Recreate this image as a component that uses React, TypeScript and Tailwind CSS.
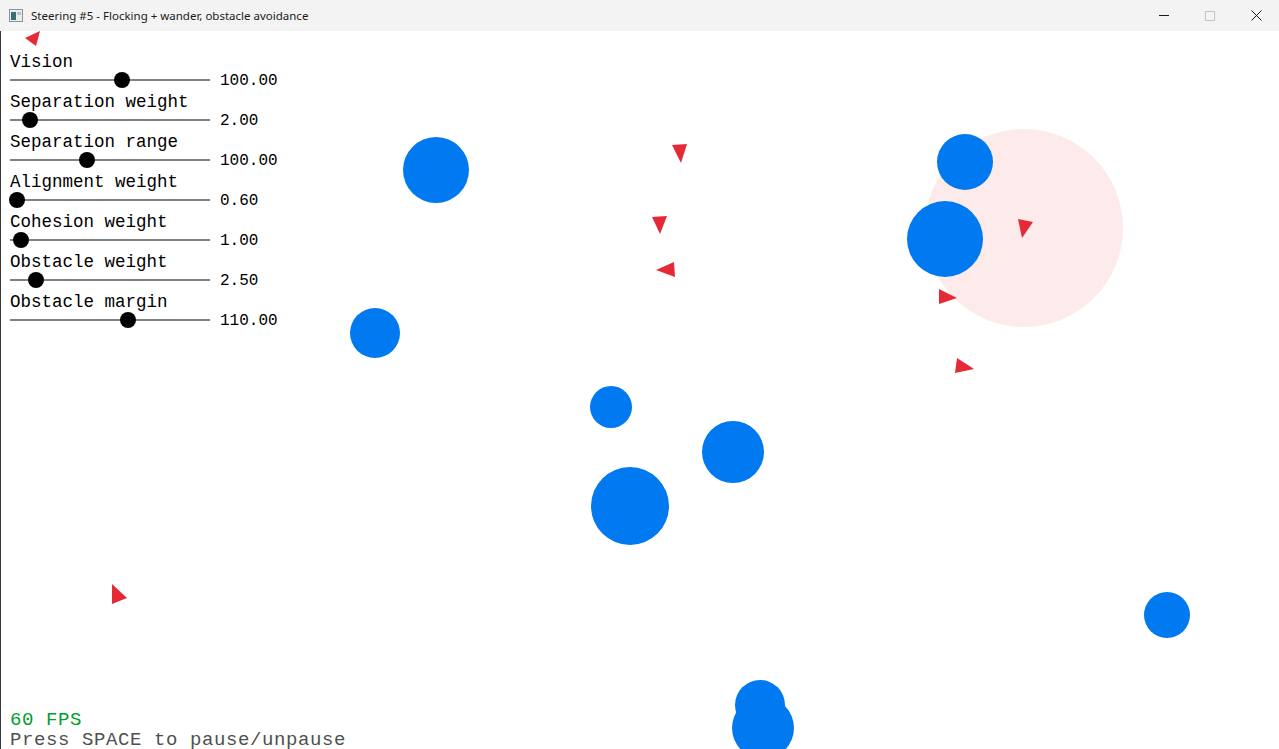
import React from "react";

const sliders = [
  { label: "Vision", pos: 112, value: "100.00" },
  { label: "Separation weight", pos: 20, value: "2.00" },
  { label: "Separation range", pos: 77, value: "100.00" },
  { label: "Alignment weight", pos: 7, value: "0.60" },
  { label: "Cohesion weight", pos: 11, value: "1.00" },
  { label: "Obstacle weight", pos: 26, value: "2.50" },
  { label: "Obstacle margin", pos: 118, value: "110.00" },
];

const circles: [number, number, number][] = [
  [436, 139, 33],
  [375, 302, 25],
  [965, 131, 28],
  [945, 208, 38],
  [611, 376, 21],
  [733, 421, 31],
  [630, 475, 39],
  [1167, 584, 23],
  [760, 674, 25],
  [763, 697, 31],
];

const tris: [number, number][][] = [
  [[25, 38], [40, 31], [36, 46]],
  [[672, 145], [687, 144], [681, 163]],
  [[652, 217], [667, 216], [660, 234]],
  [[656, 270], [674, 262], [675, 277]],
  [[1018, 219], [1033, 222], [1022, 238]],
  [[939, 289], [957, 298], [939, 304]],
  [[957, 358], [974, 369], [955, 373]],
  [[112, 584], [127, 598], [112, 604]],
];

export default function App() {
  return (
    <div className="w-[1279px] h-[749px] overflow-hidden bg-white flex flex-col">
      <div className="h-[31px] bg-[#f3f3f3] flex items-center shrink-0">
        <svg width="14" height="13" viewBox="0 0 14 13" className="ml-[9px]">
          <rect x="0.5" y="0.5" width="13" height="12" fill="#e8eef0" stroke="#8a9499" />
          <rect x="2" y="3" width="5" height="8" fill="#3d6b6e" />
          <rect x="8" y="3" width="4" height="3" fill="#b8c6cc" />
        </svg>
        <span
          className="ml-[8px] text-[11.5px] text-[#1a1a1a]"
          style={{ fontFamily: '"Segoe UI", "Noto Sans", sans-serif' }}
        >
          Steering #5 - Flocking + wander, obstacle avoidance
        </span>
        <div className="ml-auto flex items-center h-full">
          <div className="w-[46px] h-full flex items-center justify-center">
            <div className="w-[10px] h-[1px] bg-[#1a1a1a]" />
          </div>
          <div className="w-[46px] h-full flex items-center justify-center">
            <div className="w-[10px] h-[10px] border border-[#c4c4c4]" />
          </div>
          <div className="w-[46px] h-full flex items-center justify-center">
            <svg width="11" height="11" viewBox="0 0 11 11">
              <path d="M0.5 0.5 L10.5 10.5 M10.5 0.5 L0.5 10.5" stroke="#1a1a1a" strokeWidth="1" />
            </svg>
          </div>
        </div>
      </div>
      <div className="relative flex-1 flex flex-col border-l border-[#3a3a3a] overflow-hidden">
        <svg className="absolute left-[-1px] top-0" width="1279" height="718" viewBox="0 31 1279 718">
          <circle cx="1024" cy="228" r="99" fill="#fdeaeb" />
          {circles.map(([x, y, r], i) => (
            <circle key={i} cx={x} cy={y + 31} r={r} fill="#0079f1" />
          ))}
          {tris.map((t, i) => (
            <polygon key={i} points={t.map((p) => p.join(",")).join(" ")} fill="#e62937" />
          ))}
        </svg>
        <div
          className="relative flex flex-col pl-[9px] pt-[21px] text-black"
          style={{ fontFamily: '"Liberation Mono", monospace' }}
        >
          {sliders.map((s) => (
            <div key={s.label} className="flex flex-col">
              <div className="h-[20px] text-[17.5px] leading-[20px] whitespace-nowrap">{s.label}</div>
              <div className="h-[16px] mb-[4px] flex items-center">
                <div className="relative w-[200px] h-[16px]">
                  <div className="absolute left-0 right-0 top-[7px] h-[2px] bg-[#828282]" />
                  <div
                    className="absolute top-0 w-[16px] h-[16px] rounded-full bg-black"
                    style={{ left: s.pos - 8 }}
                  />
                </div>
                <span className="ml-[10px] text-[16px] leading-[16px] translate-y-[1px]">{s.value}</span>
              </div>
            </div>
          ))}
        </div>
        <div
          className="relative mt-auto pl-[9px] flex flex-col text-[19px] leading-[20px] tracking-[0.6px]"
          style={{ fontFamily: '"Liberation Mono", monospace' }}
        >
          <div className="h-[20px] text-[#009e2f]">60 FPS</div>
          <div className="h-[19px] text-[#505050] whitespace-nowrap">Press SPACE to pause/unpause</div>
        </div>
      </div>
    </div>
  );
}
